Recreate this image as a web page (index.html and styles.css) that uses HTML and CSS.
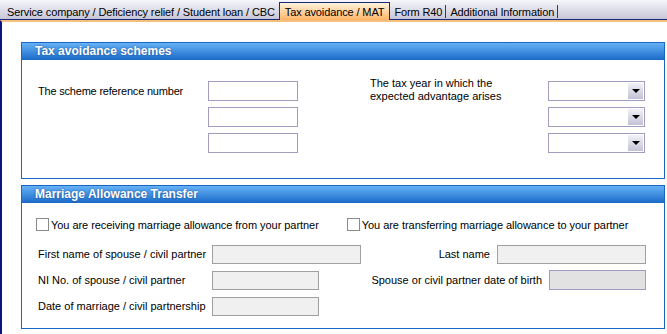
FILE: index.html
```html
<!DOCTYPE html>
<html lang="en">
<head>
  <meta charset="UTF-8" />
  <meta name="viewport" content="width=device-width, initial-scale=1.0"/>
  <title>Tax avoidance / MAT</title>
  <link rel="stylesheet" href="styles.css">
</head>
<body>
  <div class="tabs">
    <div class="tab first">Service company / Deficiency relief / Student loan / CBC</div>
    <div class="tab active">Tax avoidance / MAT</div>
    <div class="tab">Form R40</div>
    <div class="tab">Additional Information</div>
  </div>

  <div class="page">
    <section class="panel">
      <h2 class="panel-head">Tax avoidance schemes</h2>
      <div class="schemes">
        <label class="ref-label" for="ref0">The scheme reference number</label>
        <label class="year-label">The tax year in which the<br>expected advantage arises</label>

        <input type="text" class="ref" id="ref0">
        <div class="select year"><span class="drop"></span></div>
        <input type="text" class="ref" id="ref1">
        <div class="select year"><span class="drop"></span></div>
        <input type="text" class="ref" id="ref2">
        <div class="select year"><span class="drop"></span></div>
      </div>
    </section>

    <section class="panel">
      <h2 class="panel-head">Marriage Allowance Transfer</h2>
      <div class="marriage">
        <div class="checks">
          <label class="check-item"><span class="check"></span>You are receiving marriage allowance from your partner</label>
          <label class="check-item second"><span class="check"></span>You are transferring marriage allowance to your partner</label>
        </div>

        <div class="row">
          <label class="lbl">First name of spouse / civil partner</label>
          <input type="text" class="field wide" disabled>
          <div class="right">
            <label>Last name</label>
            <input type="text" class="field wide" disabled>
          </div>
        </div>

        <div class="row">
          <label class="lbl">NI No. of spouse / civil partner</label>
          <input type="text" class="field short" disabled>
          <div class="right">
            <label>Spouse or civil partner date of birth</label>
            <input type="text" class="field date" disabled>
          </div>
        </div>

        <div class="row">
          <label class="lbl">Date of marriage / civil partnership</label>
          <input type="text" class="field short" disabled>
        </div>
      </div>
    </section>
  </div>
</body>
</html>
```

FILE: styles.css
```css
body {
  font-family: "Liberation Sans", Arial, sans-serif;
  font-size: 11px;
  color: #000;
  margin: 0;
  padding: 0;
  background-color: white;
  width: 667px;
  height: 334px;
  overflow: hidden;
}
.tabs {
  display: flex;
  align-items: flex-end;
  height: 19px;
  padding-left: 2px;
  background: linear-gradient(#f6f6fa, #c6c6d8);
  border-bottom: 1px solid #1c2a7c;
  letter-spacing: -0.12px;
}
.tab {
  height: 17px;
  line-height: 20px;
  padding: 0 4px;
  color: #000;
  white-space: nowrap;
  position: relative;
}
.tab + .tab:not(.active)::after {
  content: "";
  position: absolute;
  right: 0;
  top: 3px;
  height: 13px;
  border-right: 1px solid #3a3a58;
}
.tab.first {
  padding-left: 5px;
  border-right: 1px solid #1c2a7c;
}
.tab.active {
  height: 17px;
  line-height: 18px;
  margin-bottom: -1px;
  padding: 0 5px;
  border: 1px solid #1c2a7c;
  border-bottom: none;
  border-left: none;
  background: linear-gradient(#fff3dc, #ffb466);
}
.page {
  border-top: 2px solid #f6c07c;
  border-left: 2px solid #0a1480;
  height: 320px;
  padding: 20px 0 0 19px;
  box-sizing: border-box;
}
.panel {
  width: 644px;
  box-sizing: border-box;
  border: 1px solid #1a66c6;
  margin-bottom: 6px;
}
.panel-head {
  margin: 0;
  height: 17px;
  line-height: 17px;
  padding-left: 13px;
  font-size: 12px;
  font-weight: bold;
  color: white;
  text-shadow: 0 0 2px rgba(0, 30, 90, 0.6);
  background: linear-gradient(#66b2f6, #1a6ac8);
}
.schemes {
  display: grid;
  grid-template-columns: 170px 90px 72px 178px 97px;
  grid-auto-rows: 20px;
  row-gap: 6px;
  padding: 21px 18px 25px 16px;
}
.ref-label {
  grid-column: 1;
  grid-row: 1;
  align-self: center;
  letter-spacing: -0.2px;
}
.year-label {
  grid-column: 4;
  grid-row: 1;
  align-self: start;
  line-height: 13px;
  margin-top: -4px;
}
.ref {
  grid-column: 2;
}
.year {
  grid-column: 5;
}
input {
  height: 20px;
  box-sizing: border-box;
  margin: 0;
  padding: 2px;
  border: 1px solid #a19dc0;
  background-color: white;
  font: inherit;
}
.select {
  display: flex;
  justify-content: flex-end;
  border: 1px solid #a19dc0;
  box-sizing: border-box;
  padding: 1px;
  background-color: white;
}
.drop {
  width: 15px;
  display: flex;
  align-items: center;
  justify-content: center;
  background: linear-gradient(#f2f2f8, #c2c2d6);
}
.drop::before {
  content: "";
  border-left: 4px solid transparent;
  border-right: 4px solid transparent;
  border-top: 4px solid #000;
}
.marriage {
  padding: 15px 18px 12px 14px;
}
.checks {
  display: flex;
  height: 13px;
  margin-bottom: 13px;
}
.check-item {
  display: flex;
  align-items: center;
  gap: 2px;
  white-space: nowrap;
  letter-spacing: -0.05px;
}
.check-item.second {
  margin-left: 28px;
}
.check {
  width: 13px;
  height: 13px;
  box-sizing: border-box;
  border: 1px solid #8a8a8a;
  background-color: white;
}
.row {
  display: flex;
  align-items: center;
  height: 20px;
  margin-bottom: 6px;
  padding-left: 2px;
}
.row:last-child {
  margin-bottom: 0;
}
.lbl {
  width: 174px;
}
.right {
  margin-left: auto;
  display: flex;
  align-items: center;
  gap: 7px;
}
.field {
  background-color: #f0f0f0;
  border-color: #a0a0a0;
  height: 19px;
}
.wide {
  width: 149px;
}
.short {
  width: 107px;
}
.date {
  width: 97px;
  height: 20px;
  background-color: #e2e2e2;
  border-color: #a19dc0;
}
```
